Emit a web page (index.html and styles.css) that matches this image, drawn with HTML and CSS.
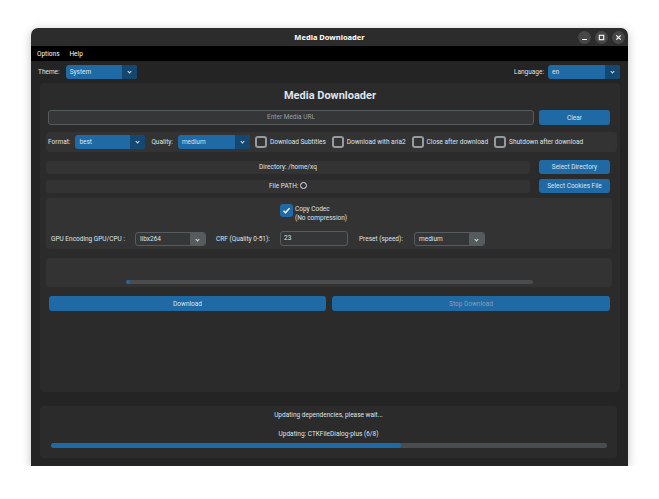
FILE: index.html
```html
<!DOCTYPE html>
<html lang="en">
<head>
  <meta charset="UTF-8" />
  <title>Media Downloader</title>
  <link rel="stylesheet" href="styles.css">
</head>
<body>

<div class="window">

  <div class="titlebar">
    <span class="title">Media Downloader</span>
    <div class="controls">
      <span class="ctl"><svg width="7" height="7" viewBox="0 0 7 7"><path d="M1 5.5h5" stroke="#fff" stroke-width="1.2"/></svg></span>
      <span class="ctl"><svg width="7" height="7" viewBox="0 0 7 7"><rect x="1.3" y="1.3" width="4.4" height="4.4" fill="none" stroke="#fff" stroke-width="1.1"/></svg></span>
      <span class="ctl"><svg width="7" height="7" viewBox="0 0 7 7"><path d="M1.3 1.3l4.4 4.4M5.7 1.3l-4.4 4.4" stroke="#fff" stroke-width="1.2"/></svg></span>
    </div>
  </div>

  <div class="menubar">
    <span>Options</span>
    <span>Help</span>
  </div>

  <div class="content">

    <div class="topbar">
      <span class="label theme">Theme:</span>
      <div class="option w71"><span>System</span><i class="arrow"></i></div>
      <span class="spacer"></span>
      <span class="label">Language:</span>
      <div class="option w72"><span>en</span><i class="arrow"></i></div>
    </div>

    <div class="main">
      <h1>Media Downloader</h1>

      <div class="url-row">
        <div class="entry url">Enter Media URL</div>
        <button class="btn w71">Clear</button>
      </div>

      <div class="opts">
        <span class="label">Format:</span>
        <div class="option w70"><span>best</span><i class="arrow"></i></div>
        <span class="label q">Quality:</span>
        <div class="option w72"><span>medium</span><i class="arrow"></i></div>
        <label class="check"><i class="box"></i>Download Subtitles</label>
        <label class="check"><i class="box"></i>Download with aria2</label>
        <label class="check"><i class="box"></i>Close after download</label>
        <label class="check"><i class="box"></i>Shutdown after download</label>
      </div>

      <div class="path-row first">
        <div class="path">Directory: /home/xq</div>
        <button class="btn w71">Select Directory</button>
      </div>
      <div class="path-row">
        <div class="path">File PATH: <span class="circ"></span></div>
        <button class="btn w71">Select Cookies File</button>
      </div>

      <div class="codec">
        <div class="codec-top">
          <i class="box on"><svg width="9" height="9" viewBox="0 0 9 9"><path d="M1.5 4.8l2 2 4-4.6" fill="none" stroke="#fff" stroke-width="1.4"/></svg></i>
          <span class="codec-text">Copy Codec<br>(No compression)</span>
        </div>
        <div class="codec-row">
          <span class="gpu">GPU Encoding GPU/CPU :</span>
          <div class="combo w71"><span>libx264</span><i class="arrow"></i></div>
          <span class="crf">CRF (Quality 0-51):</span>
          <div class="entry crf-entry">23</div>
          <span class="preset">Preset (speed):</span>
          <div class="combo w71"><span>medium</span><i class="arrow"></i></div>
        </div>
      </div>

      <div class="progress-frame">
        <div class="bar small"><div class="fill" style="width: 1%"></div></div>
      </div>

      <div class="actions">
        <button class="btn download">Download</button>
        <button class="btn stop">Stop Download</button>
      </div>
    </div>

    <div class="status">
      <p>Updating dependencies, please wait...</p>
      <p class="second">Updating: CTKFileDialog-plus (6/8)</p>
      <div class="bar big"><div class="fill" style="width: 63%"></div></div>
    </div>

  </div>
</div>

</body>
</html>
```

FILE: styles.css
```css
body {
  margin: 0;
  background: #ffffff;
  font-family: Roboto, "Liberation Sans", sans-serif;
  font-size: 6.5px;
  color: #dce4ee;
}
.window {
  margin: 28px 0 0 31px;
  width: 597px;
  height: 438px;
  display: flex;
  flex-direction: column;
  border-radius: 7px 7px 0 0;
  overflow: hidden;
  box-shadow: 0 2px 10px rgba(0, 0, 0, 0.25);
}
.titlebar {
  height: 18px;
  background: #2c2c2c;
  display: flex;
  align-items: center;
  justify-content: center;
  position: relative;
}
.title {
  font-family: "Noto Sans", sans-serif;
  font-weight: bold;
  font-size: 7.5px;
  color: #ffffff;
}
.controls {
  position: absolute;
  right: 3px;
  top: 3px;
  display: flex;
  gap: 4px;
}
.ctl {
  width: 13px;
  height: 13px;
  border-radius: 50%;
  background: #474747;
  display: flex;
  align-items: center;
  justify-content: center;
}
.menubar {
  height: 15px;
  background: #000000;
  display: flex;
  align-items: center;
  gap: 10px;
  padding-left: 6px;
  color: #ffffff;
}
.content {
  flex: 1;
  background: #242424;
  display: flex;
  flex-direction: column;
}
.topbar {
  height: 22px;
  display: flex;
  align-items: center;
  padding: 0 8px 0 7px;
}
.topbar .theme {
  margin-right: 6px;
}
.spacer {
  flex: 1;
}
.label {
  margin-right: 4px;
}
.option, .combo {
  height: 14px;
  border-radius: 3px;
  background: #1f6aa5;
  display: flex;
  align-items: center;
  position: relative;
  overflow: hidden;
}
.option span, .combo span {
  flex: 1;
  padding-left: 4px;
}
.arrow {
  width: 15px;
  height: 100%;
  background: #144870;
  position: relative;
}
.arrow::after {
  content: "";
  position: absolute;
  left: 6px;
  top: 5px;
  width: 2px;
  height: 2px;
  border-right: 1.2px solid #dce4ee;
  border-bottom: 1.2px solid #dce4ee;
  transform: rotate(45deg);
}
.combo {
  background: #343638;
  border: 1px solid #565b5e;
  height: 12px;
}
.combo .arrow {
  background: #565b5e;
}
.combo.w71 { width: 69px; }
.w70 { width: 70px; }
.w71 { width: 71px; }
.w72 { width: 72px; }
.main {
  height: 309px;
  margin: 0 8px 0 9px;
  background: #2b2b2b;
  border-radius: 4px;
}
h1 {
  margin: 6px 0 0;
  height: 14px;
  line-height: 14px;
  text-align: center;
  font-size: 11px;
  font-weight: bold;
  color: #dce4ee;
}
.url-row {
  display: flex;
  margin: 7px 0 0 8px;
  gap: 5px;
}
.entry {
  height: 13px;
  line-height: 13px;
  background: #343638;
  border: 1px solid #565b5e;
  border-radius: 3px;
}
.url {
  width: 484px;
  text-align: center;
  color: #9a9ea2;
}
.btn {
  height: 15px;
  padding: 0;
  border: none;
  border-radius: 3px;
  background: #1f6aa5;
  color: #dce4ee;
  font-family: Roboto, "Liberation Sans", sans-serif;
  font-size: 6.5px;
}
.opts {
  margin: 7px 0 0 6px;
  width: 569px;
  height: 20px;
  padding-left: 2px;
  background: #333333;
  border-radius: 4px;
  display: flex;
  align-items: center;
}
.opts .label {
  margin-right: 5px;
}
.opts .q {
  margin-left: 6px;
}
.check {
  display: flex;
  align-items: center;
  margin-left: 5px;
}
.check + .check {
  margin-left: 6px;
}
.box {
  width: 8px;
  height: 8px;
  border: 2px solid #949a9f;
  border-radius: 3px;
  margin-right: 3px;
  display: inline-block;
}
.box.on {
  width: 13px;
  height: 13px;
  border: none;
  margin-right: 2px;
  background: #1f6aa5;
  display: flex;
  align-items: center;
  justify-content: center;
}
.path-row {
  display: flex;
  align-items: center;
  gap: 9px;
  margin: 5px 0 0 6px;
}
.path-row.first {
  margin-top: 8px;
}
.path {
  width: 484px;
  height: 13px;
  line-height: 13px;
  text-align: center;
  background: #333333;
  border-radius: 3px;
}
.path-row .btn {
  height: 14px;
}
.circ {
  display: inline-block;
  width: 5px;
  height: 5px;
  border: 1px solid #dce4ee;
  border-radius: 50%;
  vertical-align: -1px;
}
.codec {
  margin: 5px 0 0 6px;
  width: 566px;
  height: 51px;
  background: #333333;
  border-radius: 4px;
}
.codec-top {
  display: flex;
  padding: 6px 0 0 234px;
  height: 22px;
}
.codec-text {
  line-height: 9px;
  padding-top: 1px;
}
.codec-row {
  display: flex;
  align-items: center;
  padding-left: 5px;
  margin-top: 5px;
}
.codec-row .gpu { width: 84px; }
.codec-row .crf { width: 64px; margin-left: 10px; }
.codec-row .preset { width: 55px; margin-left: 11px; }
.crf-entry {
  width: 63px;
  padding-left: 3px;
}
.progress-frame {
  margin: 9px 0 0 6px;
  width: 566px;
  height: 29px;
  background: #333333;
  border-radius: 4px;
  padding-top: 22px;
  box-sizing: border-box;
}
.bar {
  background: #4a4d50;
  border-radius: 3px;
  overflow: hidden;
}
.fill {
  height: 100%;
  background: #1f6aa5;
  border-radius: 3px;
  min-width: 4px;
}
.bar.small {
  margin-left: 80px;
  width: 407px;
  height: 4px;
}
.actions {
  display: flex;
  gap: 6px;
  margin: 9px 0 0 9px;
}
.download { width: 277px; }
.stop {
  width: 278px;
  color: #8b9db0;
}
.status {
  margin: 14px 11px 0 9px;
  height: 52px;
  background: #2b2b2b;
  border-radius: 4px;
  padding-top: 4px;
  box-sizing: border-box;
  text-align: center;
}
.status p {
  margin: 0;
  line-height: 10px;
}
.status .second {
  margin-top: 9px;
}
.bar.big {
  margin: 4px 10px 0 11px;
  height: 5px;
}
```
